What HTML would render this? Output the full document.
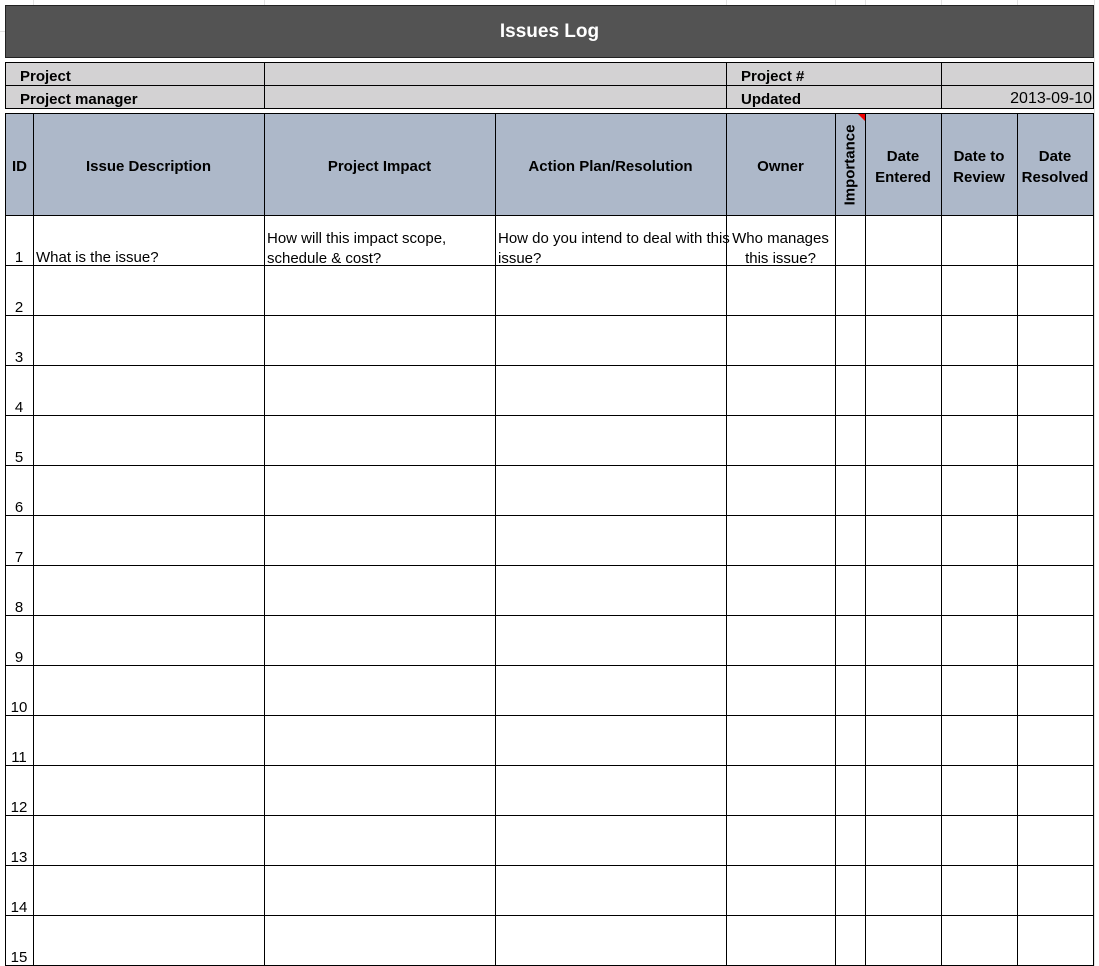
<!DOCTYPE html>
<html><head><style>
body{margin:0;width:1099px;height:966px;background:#fff;position:relative;overflow:hidden;font-family:"Liberation Sans",Arial,sans-serif;font-size:15px;color:#000}
.a{position:absolute;box-sizing:border-box}
.g{position:absolute;background:#e3e3e3}
.t{position:absolute;white-space:nowrap}
.b{font-weight:bold}
.c{text-align:center}
</style></head><body>
<div class="g" style="left:33px;top:0;width:1px;height:5px"></div>
<div class="g" style="left:264px;top:0;width:1px;height:5px"></div>
<div class="g" style="left:726px;top:0;width:1px;height:5px"></div>
<div class="g" style="left:835px;top:0;width:1px;height:5px"></div>
<div class="g" style="left:865px;top:0;width:1px;height:5px"></div>
<div class="g" style="left:941px;top:0;width:1px;height:5px"></div>
<div class="g" style="left:1017px;top:0;width:1px;height:5px"></div>
<div class="g" style="left:0;top:31px;width:5px;height:1px"></div>
<div class="g" style="left:1094px;top:0;width:1px;height:966px"></div>
<div class="a" style="left:5px;top:5px;width:1089px;height:53px;background:#535353;border:1px solid #222"></div>
<div class="t b" style="left:0;width:1099px;top:21px;text-align:center;color:#fff;font-size:19px">Issues Log</div>
<div class="a" style="left:5px;top:62px;width:1089px;height:47px;background:#d3d2d3;border:1px solid #000"></div>
<div class="a" style="left:5px;top:85px;width:1089px;height:1px;background:#000"></div>
<div class="a" style="left:264px;top:62px;width:1px;height:47px;background:#000"></div>
<div class="a" style="left:726px;top:62px;width:1px;height:47px;background:#000"></div>
<div class="a" style="left:941px;top:62px;width:1px;height:47px;background:#000"></div>
<div class="t b" style="left:20px;top:68px">Project</div>
<div class="t b" style="left:20px;top:91px">Project manager</div>
<div class="t b" style="left:741px;top:68px">Project #</div>
<div class="t b" style="left:741px;top:91px">Updated</div>
<div class="t" style="right:7px;top:90px;font-size:16px">2013-09-10</div>
<div class="a" style="left:5px;top:113px;width:1089px;height:103px;background:#adb8c9;border:1px solid #000"></div>
<div class="a" style="left:5px;top:215px;width:1089px;height:751px;border:1px solid #000;border-top:none"></div>
<div id="v"></div>
<div class="t b" style="left:12px;top:158px">ID</div>
<div class="t b c" style="left:33px;width:231px;top:158px">Issue Description</div>
<div class="t b c" style="left:264px;width:231px;top:158px">Project Impact</div>
<div class="t b c" style="left:495px;width:231px;top:158px">Action Plan/Resolution</div>
<div class="t b c" style="left:726px;width:109px;top:158px">Owner</div>
<div class="t b" style="left:850px;top:165px;transform:translate(-50%,-50%) rotate(-90deg)">Importance</div>
<div class="a" style="left:858px;top:114px;width:0;height:0;border-left:7px solid transparent;border-top:7px solid #e00"></div>
<div class="t b c" style="left:865px;width:76px;top:146px;line-height:21px">Date<br>Entered</div>
<div class="t b c" style="left:941px;width:76px;top:146px;line-height:21px">Date to<br>Review</div>
<div class="t b c" style="left:1017px;width:76px;top:146px;line-height:21px">Date<br>Resolved</div>
<div class="t" style="left:36px;top:249px">What is the issue?</div>
<div class="t" style="left:267px;top:229px;line-height:20px">How will this impact scope,<br>schedule &amp; cost?</div>
<div class="t" style="left:498px;top:229px;line-height:20px">How do you intend to deal with this<br>issue?</div>
<div class="t c" style="left:726px;width:109px;top:229px;line-height:20px">Who manages<br>this issue?</div>
<script>
var xs=[33,264,495,726,835,865,941,1017],h='';
xs.forEach(function(x){h+='<div class="a" style="left:'+x+'px;top:113px;width:1px;height:853px;background:#000"></div>'});
for(var i=1;i<=15;i++){var y=215+50*(i-1);
h+='<div class="a" style="left:5px;top:'+(y+50)+'px;width:1089px;height:1px;background:#000"></div>';
h+='<div class="t c" style="left:5px;width:28px;top:'+(y+34)+'px">'+i+'</div>';}
document.getElementById('v').innerHTML=h;
</script>
</body></html>
